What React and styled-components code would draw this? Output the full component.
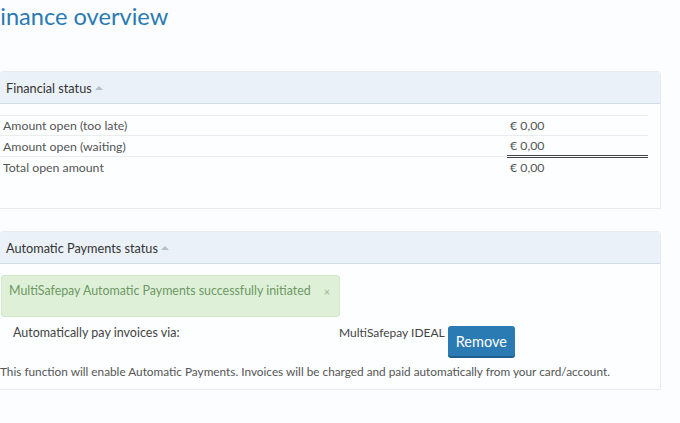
import React from 'react'
import styled, { createGlobalStyle } from 'styled-components'

const GlobalStyle = createGlobalStyle`
    body {
        margin: 0;
        background: #fbfdfe;
        font-family: "Lato", "Liberation Sans", sans-serif;
        color: #444;
    }
`;

const Page = styled.div`
    margin-left: -13px;
    width: 674px;
`;

const Title = styled.h1`
    margin: 1px 0 0;
    font-size: 23.6px;
    font-weight: 400;
    line-height: 30px;
    color: #2a7ab3;
`;

const Panel = styled.section`
    margin: ${p => p.top}px 0 0 12px;
    border: 1px solid #e6ebef;
    border-radius: 4px 4px 0 0;
    background: #fcfeff;
`;

const PanelHeader = styled.div`
    height: 31px;
    padding: 0 6px;
    display: flex;
    align-items: center;
    gap: 3px;
    background: #ebf1f8;
    border-bottom: 1px solid #cfdbe5;
    border-radius: 4px 4px 0 0;
    font-size: 12.7px;
    color: #333;
`;

const Caret = styled.span`
    width: 0;
    height: 0;
    border-left: 4px solid transparent;
    border-right: 4px solid transparent;
    border-bottom: 4px solid #b3c0cc;
    margin-top: 1px;
`;

const PanelBody = styled.div`
    padding: ${p => p.pad};
`;

const Table = styled.table`
    width: 648px;
    border-collapse: collapse;
    font-size: 12.3px;
    color: #555;
`;

const Cell = styled.td`
    padding: 0 3px;
    height: 19px;
    border-top: ${p => (p.line ? '1px solid #e9edf0' : 'none')};
    border-bottom: ${p => (p.total ? '3px double #444' : 'none')};
    width: ${p => p.w || 'auto'};
    vertical-align: middle;
`;

const Alert = styled.div`
    display: inline-flex;
    align-items: flex-start;
    gap: 13px;
    margin-left: 1px;
    width: 339px;
    box-sizing: border-box;
    height: 42px;
    padding: 7px 8px 0 7px;
    background: #dff0d8;
    border: 1px solid #d4e8c8;
    border-radius: 3px;
    font-size: 12.4px;
    white-space: nowrap;
    color: #6c9863;
`;

const Close = styled.span`
    font-size: 11px;
    color: #9bb58f;
    line-height: 17px;
`;

const PayRow = styled.div`
    display: flex;
    align-items: flex-start;
    margin-top: 8px;
    padding-left: 13px;
    font-size: 12.5px;
    color: #444;
`;

const Label = styled.div`
    width: 326px;
    line-height: 16px;
`;

const Value = styled.div`
    font-size: 12px;
    line-height: 16px;
    margin-right: 3px;
`;

const Button = styled.button`
    height: 32px;
    padding: 0 8px;
    margin-top: 1px;
    border: none;
    border-bottom: 2px solid #1f5f8e;
    border-radius: 3px;
    background: #2a7ab3;
    color: #fff;
    font-family: inherit;
    font-size: 14.5px;
`;

const Note = styled.p`
    margin: 6px 0 0;
    font-size: 11.8px;
    color: #555;
    line-height: 16px;
`;

const rows = [
    { label: 'Amount open (too late)', value: '€ 0,00', line: true },
    { label: 'Amount open (waiting)', value: '€ 0,00', line: true, total: true },
    { label: 'Total open amount', value: '€ 0,00', line: true },
]

export default function App() {
    return (
        <Page>
            <GlobalStyle />
            <Title>Finance overview</Title>

            <Panel top={40}>
                <PanelHeader>Financial status <Caret /></PanelHeader>
                <PanelBody pad="11px 12px 31px 0">
                    <Table>
                        <tbody>
                            {rows.map(r => (
                                <tr key={r.label}>
                                    <Cell line={r.line} w="501px">{r.label}</Cell>
                                    <Cell line={r.line} total={r.total}>{r.value}</Cell>
                                </tr>
                            ))}
                        </tbody>
                    </Table>
                </PanelBody>
            </Panel>

            <Panel top={22}>
                <PanelHeader>Automatic Payments status <Caret /></PanelHeader>
                <PanelBody pad="11px 0 9px 0">
                    <Alert>
                        MultiSafepay Automatic Payments successfully initiated
                        <Close>×</Close>
                    </Alert>
                    <PayRow>
                        <Label>Automatically pay invoices via:</Label>
                        <Value>MultiSafepay IDEAL</Value>
                        <Button>Remove</Button>
                    </PayRow>
                    <Note>
                        This function will enable Automatic Payments. Invoices will be charged and paid automatically from your card/account.
                    </Note>
                </PanelBody>
            </Panel>
        </Page>
    )
}
